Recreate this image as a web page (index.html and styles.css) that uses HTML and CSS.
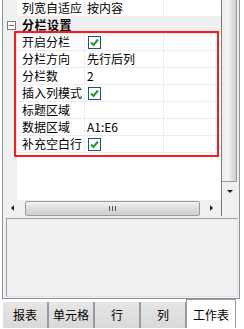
FILE: index.html
```html
<!DOCTYPE html>
<html lang="zh-CN">
<head>
    <meta charset="UTF-8">
    <title>属性</title>
    <link rel="stylesheet" href="styles.css">
</head>
<body>
    <div class="frame">
        <div class="top">
            <div class="grid-wrap">
                <div class="rows">
                    <div class="row">
                        <div class="margin"></div>
                        <div class="name">列宽自适应</div>
                        <div class="value">按内容</div>
                        <div class="extra"></div>
                    </div>
                    <div class="row section">
                        <div class="margin"><span class="toggle"></span></div>
                        <div class="section-name">分栏设置</div>
                    </div>
                    <div class="row">
                        <div class="margin"></div>
                        <div class="name">开启分栏</div>
                        <div class="value"><span class="check"><svg width="11" height="11" viewBox="0 0 11 11"><path d="M2 5.5 L4.5 8 L9 2.5" fill="none" stroke="#1f9a2a" stroke-width="2"/></svg></span></div>
                        <div class="extra"></div>
                    </div>
                    <div class="row">
                        <div class="margin"></div>
                        <div class="name">分栏方向</div>
                        <div class="value">先行后列</div>
                        <div class="extra"></div>
                    </div>
                    <div class="row">
                        <div class="margin"></div>
                        <div class="name">分栏数</div>
                        <div class="value">2</div>
                        <div class="extra"></div>
                    </div>
                    <div class="row">
                        <div class="margin"></div>
                        <div class="name">插入列模式</div>
                        <div class="value"><span class="check"><svg width="11" height="11" viewBox="0 0 11 11"><path d="M2 5.5 L4.5 8 L9 2.5" fill="none" stroke="#1f9a2a" stroke-width="2"/></svg></span></div>
                        <div class="extra"></div>
                    </div>
                    <div class="row">
                        <div class="margin"></div>
                        <div class="name">标题区域</div>
                        <div class="value"></div>
                        <div class="extra"></div>
                    </div>
                    <div class="row">
                        <div class="margin"></div>
                        <div class="name">数据区域</div>
                        <div class="value">A1:E6</div>
                        <div class="extra"></div>
                    </div>
                    <div class="row">
                        <div class="margin"></div>
                        <div class="name">补充空白行</div>
                        <div class="value"><span class="check"><svg width="11" height="11" viewBox="0 0 11 11"><path d="M2 5.5 L4.5 8 L9 2.5" fill="none" stroke="#1f9a2a" stroke-width="2"/></svg></span></div>
                        <div class="extra"></div>
                    </div>
                    <div class="row filler">
                        <div class="margin"></div>
                        <div class="blank"></div>
                    </div>
                </div>
                <div class="hscroll">
                    <span class="arrow-left"></span>
                    <div class="hthumb"><span class="grip"></span></div>
                    <span class="arrow-right"></span>
                </div>
            </div>
            <div class="vscroll">
                <div class="vthumb"></div>
                <div class="vbtn"><span class="arrow-down"></span></div>
                <div class="corner"></div>
            </div>
            <div class="highlight"></div>
        </div>
        <div class="desc"></div>
    </div>
    <div class="tabs">
        <div class="tab">报表</div>
        <div class="tab">单元格</div>
        <div class="tab">行</div>
        <div class="tab">列</div>
        <div class="tab active">工作表</div>
    </div>
</body>
</html>
```

FILE: styles.css
```css
body {
    margin: 0;
    background-color: #ffffff;
    font-family: "Noto Sans CJK SC", "Microsoft YaHei", sans-serif;
    font-size: 12px;
    color: #000;
    width: 244px;
    height: 329px;
    overflow: hidden;
}
.frame {
    margin-left: 2px;
    width: 236px;
    border: 1px solid #8794a8;
    border-top: none;
    background-color: #f0f0f0;
    padding-bottom: 1px;
}
.top {
    display: flex;
    height: 216px;
    position: relative;
}
.grid-wrap {
    width: 219px;
    display: flex;
    flex-direction: column;
}
.rows {
    height: 200px;
    display: flex;
    flex-direction: column;
    background-color: #fff;
    border-right: 1px solid #7a7a7a;
}
.row {
    display: grid;
    grid-template-columns: 14px 68px 79px 1fr;
    height: 17px;
    line-height: 16px;
}
.margin {
    background-color: #f0f0f0;
    display: flex;
    align-items: center;
}
.name, .value, .extra {
    border-bottom: 1px solid #ececec;
}
.name {
    padding-left: 5px;
    border-right: 1px solid #ececec;
    white-space: nowrap;
}
.value {
    padding-left: 2px;
    border-right: 1px solid #ececec;
    display: flex;
    align-items: center;
}
.section {
    background-color: #f0f0f0;
}
.section-name {
    grid-column: 2 / 5;
    padding-left: 5px;
    font-weight: bold;
    letter-spacing: 0.5px;
}
.toggle {
    display: block;
    width: 7px;
    height: 7px;
    margin-left: 4px;
    border: 1px solid #7a7a7a;
    background: linear-gradient(#7a7a7a, #7a7a7a) center / 5px 1px no-repeat, #fff;
}
.check {
    display: flex;
    align-items: center;
    justify-content: center;
    width: 11px;
    height: 11px;
    border: 1px solid #1c5180;
    background-color: #fff;
    margin-left: 1px;
}
.filler {
    flex: 1;
}
.blank {
    grid-column: 2 / 5;
}
.hscroll {
    height: 16px;
    display: flex;
    align-items: center;
    background-color: #f0f0f0;
    border-right: 1px solid #7a7a7a;
}
.arrow-left {
    width: 0;
    height: 0;
    margin-left: 8px;
    border-top: 3px solid transparent;
    border-bottom: 3px solid transparent;
    border-right: 3px solid #222;
}
.hthumb {
    margin-left: 11px;
    width: 173px;
    height: 13px;
    border: 1px solid #9b9b9b;
    border-radius: 2px;
    background: linear-gradient(#f2f2f2, #dcdcdc 50%, #cfcfcf);
    display: flex;
    align-items: center;
    justify-content: center;
}
.grip {
    width: 7px;
    height: 5px;
    background: repeating-linear-gradient(90deg, #555 0 1px, transparent 1px 3px);
}
.arrow-right {
    width: 0;
    height: 0;
    margin-left: 10px;
    border-top: 3px solid transparent;
    border-bottom: 3px solid transparent;
    border-left: 3px solid #222;
}
.vscroll {
    width: 15px;
    display: flex;
    flex-direction: column;
}
.vthumb {
    height: 181px;
    border: 1px solid #9b9b9b;
    border-top: none;
    border-left: none;
    background: linear-gradient(90deg, #ececec, #f7f7f7 40%, #dadada 80%, #cfcfcf);
}
.vbtn {
    height: 18px;
    display: flex;
    align-items: center;
    justify-content: center;
}
.arrow-down {
    width: 0;
    height: 0;
    border-left: 3px solid transparent;
    border-right: 3px solid transparent;
    border-top: 3px solid #222;
}
.corner {
    flex: 1;
}
.highlight {
    position: absolute;
    left: 11px;
    top: 31px;
    width: 201px;
    height: 122px;
    border: 2px solid #ff1a1a;
    pointer-events: none;
}
.desc {
    margin: 2px 1px 0 3px;
    height: 77px;
    border: 1px solid #a0a0a0;
    border-right-color: #e3e3e3;
    border-bottom-color: #e3e3e3;
    background-color: #f0f0f0;
}
.tabs {
    display: flex;
    align-items: flex-end;
    margin-left: 3px;
    height: 29px;
}
.tab {
    width: 44px;
    height: 26px;
    line-height: 26px;
    text-align: center;
    border-right: 2px solid #9a9a9a;
    background: linear-gradient(#e6e6e6, #d9d9d9);
}
.tab.active {
    width: 48px;
    height: 28px;
    line-height: 30px;
    background: #fff;
    border: 1px solid #9a9a9a;
    border-bottom: none;
    margin-left: -1px;
}
```
